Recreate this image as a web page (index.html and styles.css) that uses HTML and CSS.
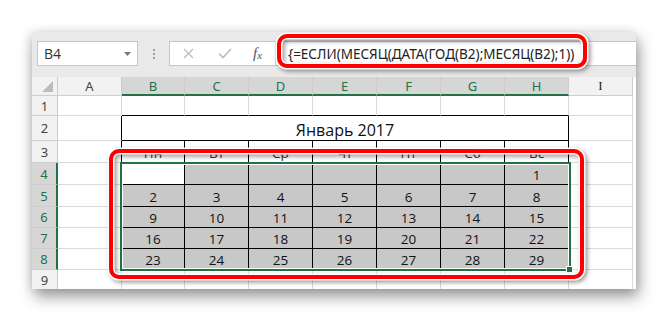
FILE: index.html
```html
<!DOCTYPE html>
<html lang="ru">
<head>
<meta charset="utf-8">
<title>Календарь</title>
<link rel="stylesheet" href="styles.css">
</head>
<body>
<div class="window">
  <div class="toolbar">
    <div class="namebox"><span>B4</span><svg class="dd" width="7" height="4" viewBox="0 0 7 4"><path d="M0 0h7L3.5 4z" fill="#7a7a7a"/></svg></div>
    <div class="dots"><i></i><i></i><i></i></div>
    <div class="fbar">
      <div class="fbtns">
        <svg class="ic-x" width="11" height="11" viewBox="0 0 11 11"><path d="M1 1l9 9M10 1l-9 9" stroke="#bdbdbd" stroke-width="1.3" fill="none"/></svg>
        <svg class="ic-ok" width="14" height="11" viewBox="0 0 14 11"><path d="M1 5.5l4 4L13 1" stroke="#bdbdbd" stroke-width="1.6" fill="none"/></svg>
        <span class="fx">f<sub>x</sub></span>
      </div>
      <div class="finput">{=ЕСЛИ(МЕСЯЦ(ДАТА(ГОД(B2);МЕСЯЦ(B2);1))</div>
    </div>
  </div>
  <div class="sheet">
    <div class="h corner"><svg width="11" height="11" viewBox="0 0 11 11"><path d="M11 0v11H0z" fill="#bcbcbc"/></svg></div>
    <div class="h colh">A</div>
    <div class="h colh sel">B</div>
    <div class="h colh sel">C</div>
    <div class="h colh sel">D</div>
    <div class="h colh sel">E</div>
    <div class="h colh sel">F</div>
    <div class="h colh sel">G</div>
    <div class="h colh sel">H</div>
    <div class="h colh serif">I</div>

    <div class="h rowh">1</div>
    <div class="c"></div>
    <div class="c bt"></div><div class="c bt"></div><div class="c bt"></div><div class="c bt"></div><div class="c bt"></div><div class="c bt"></div><div class="c bt"></div>
    <div class="c"></div>

    <div class="h rowh">2</div>
    <div class="c bl"></div>
    <div class="c cal title">Январь 2017</div>
    <div class="c"></div>

    <div class="h rowh">3</div>
    <div class="c bl"></div>
    <div class="c cal day">Пн</div><div class="c cal day">Вт</div><div class="c cal day">Ср</div><div class="c cal day">Чт</div><div class="c cal day">Пт</div><div class="c cal day">Сб</div><div class="c cal day">Вс</div>
    <div class="c"></div>

    <div class="h rowh sel">4</div>
    <div class="c bl"></div>
    <div class="c cal"></div><div class="c cal g"></div><div class="c cal g"></div><div class="c cal g"></div><div class="c cal g"></div><div class="c cal g"></div><div class="c cal g">1</div>
    <div class="c"></div>

    <div class="h rowh sel">5</div>
    <div class="c bl"></div>
    <div class="c cal g">2</div><div class="c cal g">3</div><div class="c cal g">4</div><div class="c cal g">5</div><div class="c cal g">6</div><div class="c cal g">7</div><div class="c cal g">8</div>
    <div class="c"></div>

    <div class="h rowh sel">6</div>
    <div class="c bl"></div>
    <div class="c cal g">9</div><div class="c cal g">10</div><div class="c cal g">11</div><div class="c cal g">12</div><div class="c cal g">13</div><div class="c cal g">14</div><div class="c cal g">15</div>
    <div class="c"></div>

    <div class="h rowh sel">7</div>
    <div class="c bl"></div>
    <div class="c cal g">16</div><div class="c cal g">17</div><div class="c cal g">18</div><div class="c cal g">19</div><div class="c cal g">20</div><div class="c cal g">21</div><div class="c cal g">22</div>
    <div class="c"></div>

    <div class="h rowh sel">8</div>
    <div class="c bl"></div>
    <div class="c cal g">23</div><div class="c cal g">24</div><div class="c cal g">25</div><div class="c cal g">26</div><div class="c cal g">27</div><div class="c cal g">28</div><div class="c cal g">29</div>
    <div class="c"></div>

    <div class="h rowh">9</div>
    <div class="c"></div>
    <div class="c"></div><div class="c"></div><div class="c"></div><div class="c"></div><div class="c"></div><div class="c"></div><div class="c"></div>
    <div class="c"></div>

    <div class="selection"><div class="handle"></div></div>
  </div>
</div>
<div class="mark mark-formula"></div>
<div class="mark mark-range"></div>
</body>
</html>
```
FILE: styles.css
```css
* { box-sizing: border-box; }
html, body { margin: 0; padding: 0; background: #fff; }
body {
  position: relative;
  width: 668px;
  height: 322px;
  overflow: hidden;
  font-family: "Open Sans", "Noto Sans", sans-serif;
}
.window {
  margin: 32px 0 0 32px;
  width: 604px;
  height: 257px;
  background: #fff;
  overflow: hidden;
  box-shadow: 3px 8px 14px rgba(0,0,0,.38), -2px 0 10px rgba(0,0,0,.12);
}
.toolbar {
  height: 45px;
  background: #e9e9e9;
  display: flex;
  align-items: flex-start;
  padding: 9px 0 0 5px;
}
.namebox {
  width: 101px;
  height: 25px;
  background: #fff;
  border: 1px solid #c6c6c6;
  display: flex;
  align-items: center;
  justify-content: space-between;
  padding: 0 6px 0 6px;
  font-size: 14px;
  color: #333;
}
.dots {
  width: 31px;
  height: 25px;
  display: flex;
  flex-direction: column;
  align-items: center;
  justify-content: center;
  gap: 2px;
}
.dots i { width: 2px; height: 2px; background: #a0a0a0; display: block; }
.fbar {
  flex: 1;
  display: flex;
  height: 25px;
  background: #fff;
  border: 1px solid #c6c6c6;
  border-right: none;
}
.fbtns {
  width: 106px;
  display: flex;
  align-items: center;
  border-right: 1px solid #d4d4d4;
}
.ic-x { margin-left: 13px; }
.ic-ok { margin-left: 24px; }
.fx {
  margin-left: 21px;
  font-family: "Liberation Serif", serif;
  font-style: italic;
  font-size: 15px;
  color: #555;
  line-height: 1;
}
.fx sub { font-size: 11px; vertical-align: -1px; }
.finput {
  display: flex;
  align-items: center;
  padding-left: 12px;
  font-family: "Noto Sans", sans-serif;
  font-size: 13.5px;
  color: #222;
  white-space: nowrap;
}
.sheet {
  position: relative;
  display: grid;
  grid-template-columns: 26px 64px 63px repeat(7, 64px);
  grid-template-rows: 19px 20px 25px 22px 22px 22px 21px 21px 21px 20px;
}
.c {
  border-right: 1px solid #dadada;
  border-bottom: 1px solid #dadada;
  display: flex;
  align-items: center;
  justify-content: center;
  padding-top: 2px;
  font-size: 13.5px;
  color: #111;
}
.h {
  background: #f2f2f2;
  color: #444;
  font-family: "Noto Sans", sans-serif;
  font-size: 13px;
  border-right: 1px solid #cdcdcd;
  border-bottom: 1px solid #cdcdcd;
  display: flex;
  align-items: center;
  justify-content: center;
}
.h.sel { background: #d6d6d6; color: #217346; }
.colh.sel { border-bottom: 2px solid #217346; }
.rowh.sel { border-right: 2px solid #217346; }
.serif { font-family: "Liberation Serif", serif; color: #222; }
.corner { justify-content: flex-end; align-items: flex-end; padding: 0 4px 3px 0; }
.bl { border-right-color: #000; }
.bt { border-bottom-color: #000; }
.cal { border-right-color: #000; border-bottom-color: #000; }
.title { grid-column: span 7; font-size: 16px; padding-top: 3px; }
.day { color: #333; }
.g { background: #c8c8c8; }
.selection {
  position: absolute;
  left: 88px;
  top: 85px;
  width: 451px;
  height: 109px;
  border: 2px solid #217346;
  box-shadow: inset 0 0 0 1px #fff;
}
.handle {
  position: absolute;
  right: -4px;
  bottom: -4px;
  width: 7px;
  height: 7px;
  background: #217346;
  border: 1px solid #fff;
}
.mark {
  position: absolute;
  border: 4px solid #f00;
  border-radius: 10px;
  box-shadow: 0 0 0 1.5px #fff, inset 0 0 0 1.5px #fff;
  filter: drop-shadow(2px 2px 2px rgba(0,0,0,.4));
}
.mark-formula { left: 277px; top: 34px; width: 310px; height: 34px; }
.mark-range { left: 109px; top: 149px; width: 475px; height: 130px; }
```
